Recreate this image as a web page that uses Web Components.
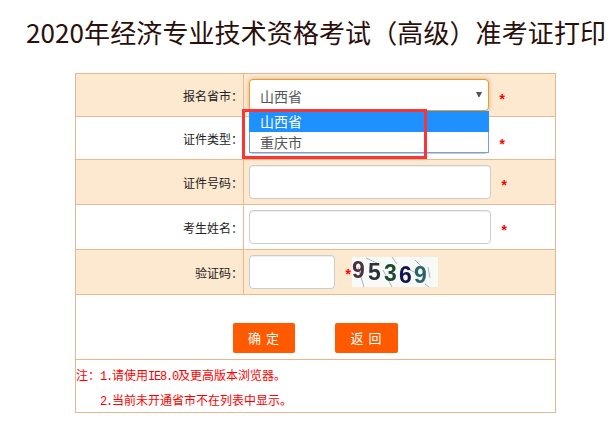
<!DOCTYPE html>
<html lang="zh-CN"><head><meta charset="utf-8"><title>准考证打印</title>
<style>
html,body{margin:0;padding:0;background:#fff;}
body{width:612px;height:425px;overflow:hidden;font-family:"Noto Sans CJK SC","Liberation Sans",sans-serif;}
note-block div{height:25px;overflow:visible}
.l{font-family:"Liberation Mono",monospace;letter-spacing:-1.2px}
</style></head><body>
<exam-page>
  <exam-title>2020年经济专业技术资格考试（高级）准考证打印</exam-title>
  <exam-form>
    <form-row label="报名省市：" tone="tint" h="42">
      <select-box focused value="山西省"></select-box>
      <req-star style="--ml:9px;--dy:12px"></req-star>
      <select-list></select-list>
    </form-row>
    <form-row label="证件类型：" h="42">
      <select-box></select-box>
      <req-star style="--ml:9px;--dy:16px"></req-star>
    </form-row>
    <form-row label="证件号码：" tone="tint" h="44">
      <text-box w="242"></text-box>
      <req-star style="--ml:9px;--dy:10px"></req-star>
    </form-row>
    <form-row label="考生姓名：" h="44">
      <text-box w="242"></text-box>
      <req-star style="--ml:9px;--dy:10px"></req-star>
    </form-row>
    <form-row label="验证码：" tone="tint" h="44">
      <text-box w="86"></text-box>
      <req-star style="--ml:9px;--dy:8px"></req-star>
      <captcha-img></captcha-img>
    </form-row>
    <action-row>
      <action-btn>确 定</action-btn>
      <action-btn wide>返 回</action-btn>
    </action-row>
    <note-block>
      <div>注：<span class="l">1.</span>请使用<span class="l">IE8.0</span>及更高版本浏览器。</div>
      <div class="i"><span class="l">2.</span>当前未开通省市不在列表中显示。</div>
    </note-block>
    <mark-box></mark-box>
  </exam-form>
</exam-page>
<script>
function def(name, css, html, extra){
  customElements.define(name, class extends HTMLElement{
    connectedCallback(){
      if(this.shadowRoot) return;
      const r=this.attachShadow({mode:'open'});
      r.innerHTML='<style>'+css+'</style>'+(typeof html==='function'?html(this):html);
      if(extra) extra(this,r);
    }
  });
}
def('exam-page',':host{display:block;width:612px}','<slot></slot>');
def('exam-title',':host{display:block;padding:13px 0 0 26px;height:73px;box-sizing:border-box;font-size:26px;line-height:38px;letter-spacing:.1px;color:#2a0f0a;white-space:nowrap}','<slot></slot>');
def('exam-form',':host{display:block;position:relative;width:481px;margin-left:75px;box-sizing:border-box;border:1px solid #e9b690}','<slot></slot>');
def('form-row',
 ':host{display:grid;grid-template-columns:167px 1fr;box-sizing:content-box;border-bottom:1px solid #efb88e;position:relative}'+
 '.lab{display:flex;align-items:center;justify-content:flex-end;border-right:1px solid #efb88e;font-size:12px;color:#222;box-sizing:border-box;width:168px}'+
 '.f{display:flex;align-items:center;padding-left:5px;margin-left:1px}',
 h=>'<div class="lab">'+h.getAttribute('label')+'</div><div class="f"><slot></slot></div>',
 (h)=>{h.style.height=h.getAttribute('h')+'px';if(h.getAttribute('tone')==='tint')h.style.background='#fde8d0';});
def('select-box',
 ':host{display:block;width:240px;height:32px;box-sizing:border-box;background:#fff;border:1px solid #ccc;border-radius:4px;font-size:14px;line-height:32px;color:#555;padding-left:10px;position:relative;box-shadow:inset 0 1px 1px rgba(0,0,0,.07)}'+
 ':host([focused]){border-color:#f59a12;box-shadow:0 0 4px rgba(120,120,120,.45)}'+
 'svg{position:absolute;right:6px;top:12px}',
 h=>(h.getAttribute('value')||'')+(h.hasAttribute('focused')?'<svg width="6" height="5"><path d="M0 0H6L3.5 5H2.5Z" fill="#555"/></svg>':''));
def('text-box',
 ':host{display:block;height:34px;box-sizing:border-box;background:#fff;border:1px solid #ccc;border-radius:4px;box-shadow:inset 0 1px 1px rgba(0,0,0,.07);flex:none}','',
 h=>{h.style.width=h.getAttribute('w')+'px';});
def('req-star',
 ':host{display:block;margin-left:var(--ml,10px);margin-top:var(--dy,0px);color:#f00;font:bold 14px/14px "Liberation Mono",monospace;width:8px;flex:none}','*');
def('select-list',
 ':host{position:absolute;left:173px;top:37px;width:240px;height:42px;box-sizing:border-box;background:#fff;border:1px solid #7b9fd6;border-top:0;font-size:14px;color:#555;z-index:2}'+
 'div{height:21px;line-height:21px;padding-left:10px}.on{background:#1e90ff;color:#fff;margin:0 -1px;padding-left:11px;height:21px}.o2{height:20px;line-height:20px}',
 '<div class="on">山西省</div><div class="o2">重庆市</div>');
def('captcha-img',':host{display:block;width:86px;height:30px;flex:none;margin-left:0}svg{display:block;filter:blur(.35px)}',
 `<svg width="86" height="30" viewBox="0 0 86 30">
 <rect width="86" height="30" fill="#f8faf9"/>
 <g stroke="#9aa0a0" stroke-width=".8" fill="none">
 <path d="M14 1L25 6M6 10L12 30M40 0L45 7M31 13L40 30M63 3L70 10M76 10L78 21M73 27L77 30M56 12L64 16"/>
 </g>
 <g font-family="Liberation Sans" font-weight="bold" font-size="23">
 <text x="0" y="21" fill="#4a2e3e">9</text>
 <text x="16" y="23" fill="#2d3137">5</text>
 <text x="32" y="24" fill="#1d4a2c">3</text>
 <text x="47" y="26" fill="#13134f">6</text>
 <text x="62" y="26" fill="#2a6468">9</text>
 </g></svg>`);
def('action-row',':host{display:flex;gap:40px;height:65px;box-sizing:border-box;padding:28px 0 0 157px;border-bottom:1px solid #e9b690}','<slot></slot>');
def('action-btn',':host{display:block;width:62px;height:30px;background:#ff5a00;color:#fff;border-radius:2px;font-size:13px;line-height:30px;text-align:center;letter-spacing:1px;white-space:pre;flex:none}:host([wide]){width:63px}','<slot></slot>');
def('note-block',':host{display:block;height:52px;box-sizing:border-box;padding-top:2px;font-size:12px;line-height:25px;color:#f00}::slotted(.i){padding-left:24px}','<slot></slot>');
def('mark-box',':host{position:absolute;left:166px;top:35px;width:185px;height:50px;box-sizing:border-box;border:3px solid #f93535;z-index:3;pointer-events:none}','');
</script>
</body></html>
